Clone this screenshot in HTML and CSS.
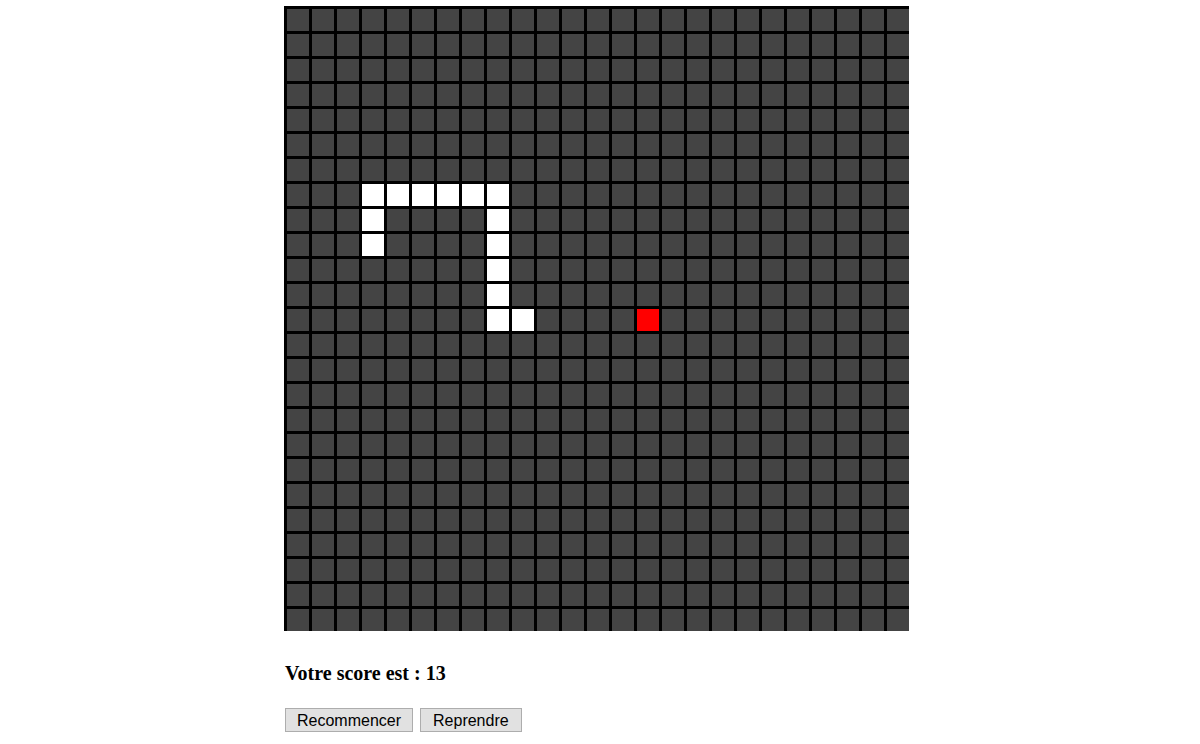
FILE: index.html
```html
<!DOCTYPE html>
<html lang="fr">
<head>
<meta charset="utf-8">
<title>Snake</title>
<link rel="stylesheet" href="styles.css">
</head>
<body>
<main class="game">
  <div class="board">
    <div class="seg" style="grid-area: 8 / 4"></div>
    <div class="seg" style="grid-area: 8 / 5"></div>
    <div class="seg" style="grid-area: 8 / 6"></div>
    <div class="seg" style="grid-area: 8 / 7"></div>
    <div class="seg" style="grid-area: 8 / 8"></div>
    <div class="seg" style="grid-area: 8 / 9"></div>
    <div class="seg" style="grid-area: 9 / 4"></div>
    <div class="seg" style="grid-area: 10 / 4"></div>
    <div class="seg" style="grid-area: 9 / 9"></div>
    <div class="seg" style="grid-area: 10 / 9"></div>
    <div class="seg" style="grid-area: 11 / 9"></div>
    <div class="seg" style="grid-area: 12 / 9"></div>
    <div class="seg" style="grid-area: 13 / 9"></div>
    <div class="seg" style="grid-area: 13 / 10"></div>
    <div class="seg food" style="grid-area: 13 / 15"></div>
  </div>
  <p class="score">Votre score est : 13</p>
  <div class="actions">
    <button class="btn" type="button">Recommencer</button>
    <button class="btn btn-wide" type="button">Reprendre</button>
  </div>
</main>
</body>
</html>
```

FILE: styles.css
```css
html, body {
  margin: 0;
  padding: 0;
  background: #fff;
}

.game {
  display: flex;
  flex-direction: column;
  align-items: flex-start;
  padding: 6px 0 0 284px;
}

.board {
  width: 625px;
  height: 625px;
  display: grid;
  grid-template-columns: repeat(25, 25px);
  grid-template-rows: repeat(25, 25px);
  background-color: #444444;
  background-image:
    linear-gradient(to right, #000 0, #000 3px, transparent 3px),
    linear-gradient(to bottom, #000 0, #000 3px, transparent 3px);
  background-size: 25px 25px, 25px 25px;
}

.seg {
  margin: 3px 0 0 3px;
  background: #ffffff;
}

.seg.food {
  background: #ff0000;
}

.score {
  margin: 31px 0 0 1px;
  font-family: "Liberation Serif", "Times New Roman", serif;
  font-weight: bold;
  font-size: 20px;
  line-height: 22px;
  color: #000;
}

.actions {
  display: flex;
  gap: 7px;
  margin-top: 24px;
  margin-left: 1px;
}

.btn {
  font-family: "Liberation Sans", Arial, sans-serif;
  font-size: 16px;
  line-height: 18px;
  height: 24px;
  padding: 3px 11px 1px;
  border: 1px solid #adadad;
  border-radius: 0;
  background: #e1e1e1;
  color: #000;
  margin: 0;
}

.btn-wide {
  padding-left: 12px;
  padding-right: 12px;
}
```
